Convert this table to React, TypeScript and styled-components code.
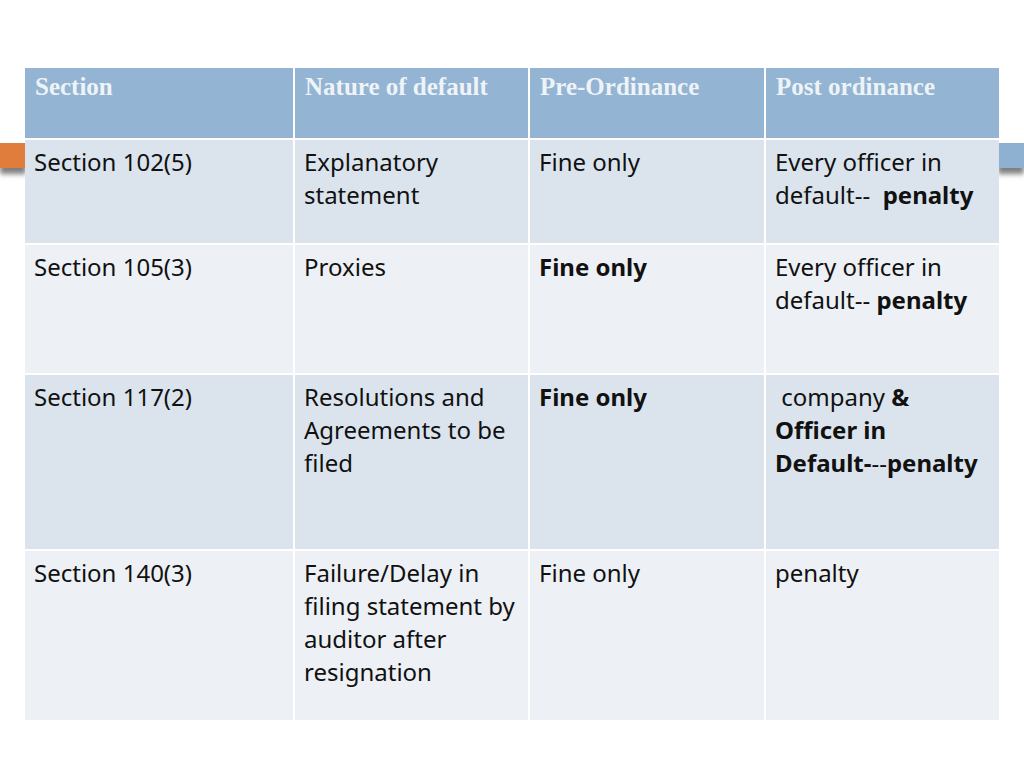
import styled, { createGlobalStyle } from "styled-components";

const GlobalStyle = createGlobalStyle`
  html, body {
    margin: 0;
    padding: 0;
    background: #ffffff;
  }
`;

const Slide = styled.div`
  position: relative;
  width: 1024px;
  height: 768px;
  overflow: hidden;
  background: #ffffff;
  padding: 68px 25px 0 25px;
  box-sizing: border-box;
`;

const Accent = styled.div<{ $side: "left" | "right" }>`
  position: absolute;
  top: 143px;
  ${({ $side }) => ($side === "left" ? "left: 0;" : "right: 0;")}
  width: 26px;
  height: 25px;
  background: ${({ $side }) => ($side === "left" ? "#e07c3c" : "#8fb1d1")};
  box-shadow: 0 6px 5px rgba(40, 40, 40, 0.6);
`;

const Table = styled.div`
  position: relative;
  display: grid;
  grid-template-columns: 268px 233px 234px 233px;
  gap: 2px;
  background: #ffffff;
`;

const HeadCell = styled.div`
  height: 70px;
  box-sizing: border-box;
  padding: 5px 9px 0 10px;
  background: #93b4d2;
  color: #eef3f8;
  font-family: "Liberation Serif", "DejaVu Serif", serif;
  font-weight: bold;
  font-size: 25px;
  line-height: 28px;
`;

const Cell = styled.div<{ $tone: "dark" | "light"; $h: number }>`
  height: ${({ $h }) => $h}px;
  box-sizing: border-box;
  padding: 5px 9px 0 9px;
  background: ${({ $tone }) => ($tone === "dark" ? "#dbe4ed" : "#edf0f4")};
  color: #111111;
  font-family: "Noto Sans", "Open Sans", sans-serif;
  font-size: 24px;
  line-height: 33px;
`;

const Strong = styled.b`
  font-weight: bold;
`;

const NoWrap = styled.span`
  white-space: nowrap;
`;

const headers = ["Section", "Nature of default", "Pre-Ordinance", "Post ordinance"];

const rows: { h: number; tone: "dark" | "light"; cells: React.ReactNode[] }[] = [
  {
    h: 103,
    tone: "dark",
    cells: [
      "Section 102(5)",
      "Explanatory statement",
      "Fine only",
      <>
        Every officer in default--&nbsp; <Strong>penalty</Strong>
      </>,
    ],
  },
  {
    h: 128,
    tone: "light",
    cells: [
      "Section 105(3)",
      "Proxies",
      <Strong>Fine only</Strong>,
      <>
        Every officer in default-- <Strong>penalty</Strong>
      </>,
    ],
  },
  {
    h: 174,
    tone: "dark",
    cells: [
      "Section 117(2)",
      "Resolutions and Agreements to be filed",
      <Strong>Fine only</Strong>,
      <>
        &nbsp;company <Strong>&amp; Officer in</Strong>{" "}
        <NoWrap>
          <Strong>Default-</Strong>--<Strong>penalty</Strong>
        </NoWrap>
      </>,
    ],
  },
  {
    h: 169,
    tone: "light",
    cells: [
      "Section 140(3)",
      "Failure/Delay in filing statement by auditor after resignation",
      "Fine only",
      "penalty",
    ],
  },
];

export default function App() {
  return (
    <>
      <GlobalStyle />
      <Slide>
        <Accent $side="left" />
        <Accent $side="right" />
        <Table>
          {headers.map((h) => (
            <HeadCell key={h}>{h}</HeadCell>
          ))}
          {rows.map((row, i) =>
            row.cells.map((c, j) => (
              <Cell key={`${i}-${j}`} $tone={row.tone} $h={row.h}>
                {c}
              </Cell>
            ))
          )}
        </Table>
      </Slide>
    </>
  );
}
